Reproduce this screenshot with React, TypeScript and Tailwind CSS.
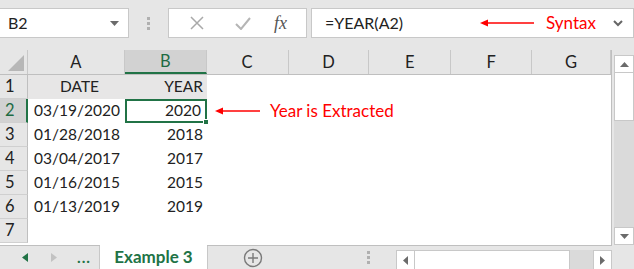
import React from 'react';

const cols = [
  { name: 'A', w: 'w-[97px]' },
  { name: 'B', w: 'w-[82px]' },
  { name: 'C', w: 'w-[82px]' },
  { name: 'D', w: 'w-[81px]' },
  { name: 'E', w: 'w-[82px]' },
  { name: 'F', w: 'w-[81px]' },
  { name: 'G', w: 'w-[79px]' },
];

const rows = [
  ['DATE', 'YEAR'],
  ['03/19/2020', '2020'],
  ['01/28/2018', '2018'],
  ['03/04/2017', '2017'],
  ['01/16/2015', '2015'],
  ['01/13/2019', '2019'],
  ['', ''],
];

function RedArrow({ w }: { w: number }) {
  return (
    <svg width={w} height="10" viewBox={`0 0 ${w} 10`}>
      <line x1="6" y1="5" x2={w} y2="5" stroke="#ff0000" strokeWidth="1.6" />
      <polygon points="0,5 8,1.5 8,8.5" fill="#ff0000" />
    </svg>
  );
}

function Dots() {
  return (
    <div className="flex flex-col items-center justify-center gap-[2px]">
      <span className="w-[3px] h-[3px] bg-[#b0b0b0]" />
      <span className="w-[3px] h-[3px] bg-[#b0b0b0]" />
      <span className="w-[3px] h-[3px] bg-[#b0b0b0]" />
    </div>
  );
}

export default function App() {
  return (
    <div className="w-[634px] h-[269px] overflow-hidden bg-[#e6e6e6] flex flex-col font-['Lato','Liberation_Sans',sans-serif] text-[15.5px] text-[#222]">
      {/* formula bar */}
      <div className="h-[50px] flex items-start pt-[8px] shrink-0">
        <div className="w-[129px] h-[30px] bg-white border border-[#c8c8c8] border-l-0 flex items-center justify-between pl-[8px] pr-[9px]">
          <span className="text-[16px]">B2</span>
          <svg width="9" height="5" viewBox="0 0 9 5"><polygon points="0,0 9,0 4.5,5" fill="#6b6b6b" /></svg>
        </div>
        <div className="w-[39px] h-[30px] flex items-center justify-center">
          <Dots />
        </div>
        <div className="w-[139px] h-[30px] bg-white border border-[#c8c8c8] flex items-center">
          <div className="w-[56px] flex justify-center">
            <svg width="14" height="14" viewBox="0 0 14 14"><path d="M1 1 L13 13 M13 1 L1 13" stroke="#a9a9a9" strokeWidth="1.5" /></svg>
          </div>
          <div className="w-[36px] flex justify-center">
            <svg width="16" height="13" viewBox="0 0 16 13"><path d="M1 7 L6 12 L15 1" stroke="#b5b5b5" strokeWidth="2" fill="none" /></svg>
          </div>
          <div className="flex-1 flex justify-center pr-[6px]">
            <span className="font-['Liberation_Serif',serif] italic text-[18px] text-[#555]">fx</span>
          </div>
        </div>
        <div className="ml-[4px] flex-1 h-[30px] bg-white border border-[#c8c8c8] flex items-center pl-[13px] pr-[10px]">
          <span className="w-[155px] text-[16px]">=YEAR(A2)</span>
          <RedArrow w={54} />
          <span className="ml-[12px] text-[#ff0000] text-[17px]">Syntax</span>
          <span className="ml-auto">
            <svg width="10" height="7" viewBox="0 0 10 7"><path d="M1 1 L5 5 L9 1" stroke="#666" strokeWidth="2" fill="none" /></svg>
          </span>
        </div>
      </div>

      {/* grid + scrollbar */}
      <div className="flex h-[196px] shrink-0">
        <div className="w-[612px] flex flex-col border-r border-b border-[#bfbfbf] bg-white">
          <div className="flex h-[25px] bg-[#e6e6e6] border-b border-[#bfbfbf] text-[16.5px]">
            <div className="w-[28px] border-r border-[#c8c8c8] flex items-end justify-end p-[3px]">
              <svg width="16" height="16" viewBox="0 0 16 16"><polygon points="16,0 16,16 0,16" fill="#b7b7b7" /></svg>
            </div>
            {cols.map((c) => (
              <div
                key={c.name}
                className={`${c.w} flex items-center justify-center border-r border-[#c8c8c8] ${
                  c.name === 'B' ? 'bg-[#d2d2d2] text-[#1e6b43] border-b-2 border-b-[#217346]' : ''
                }`}
              >
                {c.name}
              </div>
            ))}
          </div>
          {rows.map((r, i) => (
            <div key={i} className="flex h-[24px]">
              <div
                className={`w-[28px] flex items-center pl-[5px] border-b border-[#d0d0d0] text-[16.5px] ${
                  i === 1
                    ? 'bg-[#d2d2d2] text-[#1e6b43] border-r-2 border-r-[#217346]'
                    : 'bg-[#e6e6e6] border-r border-r-[#bfbfbf]'
                }`}
              >
                {i + 1}
              </div>
              <div className={`w-[97px] flex items-center pl-[6px] ${i === 0 ? 'bg-[#e7e6e6] justify-center pl-0' : ''}`}>
                {r[0]}
              </div>
              <div
                className={`relative w-[82px] flex items-center justify-end pr-[4px] ${i === 0 ? 'bg-[#e7e6e6]' : ''} ${
                  i === 1 ? 'border-2 border-[#217346]' : ''
                }`}
              >
                {r[1]}
                {i === 1 && (
                  <span className="absolute -right-[4px] -bottom-[4px] w-[6px] h-[6px] bg-[#217346] border border-white" />
                )}
              </div>
              {i === 1 && (
                <div className="flex items-center pl-[8px]">
                  <RedArrow w={45} />
                  <span className="ml-[10px] text-[#ff0000] text-[17px]">Year is Extracted</span>
                </div>
              )}
            </div>
          ))}
        </div>
        <div className="w-[22px] flex flex-col pl-[2px]">
          <div className="h-[5px]" />
          <div className="h-[18px] bg-white border border-[#c8c8c8] flex items-center justify-center">
            <svg width="9" height="5" viewBox="0 0 9 5"><polygon points="0,5 9,5 4.5,0" fill="#6b6b6b" /></svg>
          </div>
          <div className="h-[48px] bg-white border-x border-b border-[#c8c8c8]" />
          <div className="flex-1 bg-[#dadada]" />
          <div className="h-[18px] bg-white border border-[#c8c8c8] flex items-center justify-center">
            <svg width="9" height="5" viewBox="0 0 9 5"><polygon points="0,0 9,0 4.5,5" fill="#6b6b6b" /></svg>
          </div>
          <div className="h-[1px]" />
        </div>
      </div>

      {/* sheet tabs */}
      <div className="flex-1 flex items-start">
        <div className="w-[100px] h-[23px] flex items-center border-r border-[#c8c8c8]">
          <div className="w-[22px]" />
          <svg width="6" height="9" viewBox="0 0 6 9"><polygon points="6,0 6,9 0,4.5" fill="#217346" /></svg>
          <div className="w-[23px]" />
          <svg width="6" height="9" viewBox="0 0 6 9"><polygon points="0,0 0,9 6,4.5" fill="#c2c2c2" /></svg>
          <span className="ml-[20px] text-[#217346] font-bold tracking-[1px] leading-none">...</span>
        </div>
        <div className="w-[107px] h-[24px] bg-white flex items-center justify-center -mt-[1px] font-bold text-[#217346] text-[17px]">
          Example 3
        </div>
        <div className="w-[90px] h-[23px] border-l border-[#c8c8c8] flex items-center justify-center">
          <svg width="20" height="20" viewBox="0 0 20 20">
            <circle cx="10" cy="10" r="8.5" stroke="#7a7a7a" strokeWidth="1.4" fill="none" />
            <path d="M10 5 V15 M5 10 H15" stroke="#7a7a7a" strokeWidth="1.4" />
          </svg>
        </div>
        <div className="w-[99px] h-[23px] flex items-center justify-center pl-[66px] pr-[23px]">
          <Dots />
        </div>
        <div className="w-[216px] h-[20px] flex items-stretch mt-[4px]">
          <div className="w-[19px] bg-white border border-[#c8c8c8] flex items-center justify-center">
            <svg width="5" height="9" viewBox="0 0 5 9"><polygon points="5,0 5,9 0,4.5" fill="#6b6b6b" /></svg>
          </div>
          <div className="w-[155px] bg-white border-y border-r border-[#c8c8c8]" />
          <div className="flex-1 bg-[#dadada]" />
          <div className="w-[19px] bg-white border border-[#c8c8c8] flex items-center justify-center">
            <svg width="5" height="9" viewBox="0 0 5 9"><polygon points="0,0 0,9 5,4.5" fill="#6b6b6b" /></svg>
          </div>
        </div>
      </div>
    </div>
  );
}
